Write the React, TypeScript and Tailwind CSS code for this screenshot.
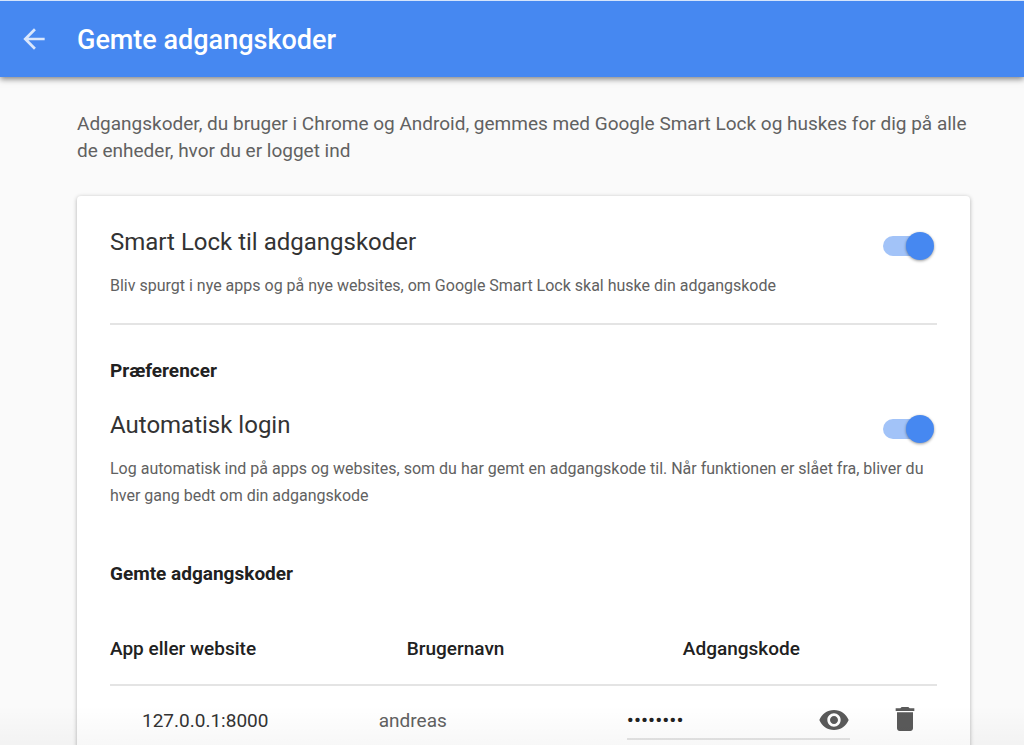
import { useId, useState, type ReactNode } from "react";
import { MdArrowBack, MdDelete, MdVisibility } from "react-icons/md";

type Login = {
  site: string;
  username: string;
  password: string;
};

const LOGINS: Login[] = [{ site: "127.0.0.1:8000", username: "andreas", password: "hemmelig" }];

/* Material switch on top of a real checkbox */
function Switch({ id, defaultChecked = false }: { id: string; defaultChecked?: boolean }) {
  return (
    <span className="relative mr-[3px] flex h-7 w-[51px] shrink-0 items-center">
      <input
        id={id}
        type="checkbox"
        defaultChecked={defaultChecked}
        className="peer absolute inset-0 z-10 m-0 h-full w-full cursor-pointer opacity-0"
      />
      <span className="h-5 w-12 rounded-full bg-gray-300 peer-checked:bg-[#a2c3f8]" />
      <span className="absolute left-0 h-7 w-7 rounded-full bg-white shadow-[0_1px_3px_rgba(0,0,0,0.4)] peer-checked:right-0 peer-checked:left-auto peer-checked:bg-[#4688f1]" />
    </span>
  );
}

function Setting({ title, children }: { title: string; children: ReactNode }) {
  const id = useId();
  return (
    <div>
      <div className="flex items-start justify-between">
        <label htmlFor={id} className="text-2xl leading-7 text-[#333]">
          {title}
        </label>
        <div className="pt-1">
          <Switch id={id} defaultChecked />
        </div>
      </div>
      <p className="mt-3 text-base leading-[27px] text-[#616161]">{children}</p>
    </div>
  );
}

function LoginRow({ login }: { login: Login }) {
  const [visible, setVisible] = useState(false);
  return (
    <tr className="align-middle">
      <td className="pt-4 pl-8 text-[19px] leading-7 text-[#333]">{login.site}</td>
      <td className="pt-4 text-[19px] leading-7 text-[#616161]">{login.username}</td>
      <td className="pt-4">
        <div className="flex h-[38px] items-center justify-between border-b-2 border-[#e4e4e4]">
          <input
            type={visible ? "text" : "password"}
            value={login.password}
            readOnly
            aria-label={`Adgangskode til ${login.site}`}
            className="w-0 flex-1 bg-transparent text-[21px] leading-7 text-[#212121] outline-none"
          />
          <button type="button" aria-label="Vis adgangskode" onClick={() => setVisible(!visible)}>
            <MdVisibility className="size-8 text-[#5a5a5a]" />
          </button>
        </div>
      </td>
      <td className="pt-3 pr-4 text-right">
        <button type="button" aria-label="Slet adgangskode" className="align-middle">
          <MdDelete className="size-8 text-[#5a5a5a]" />
        </button>
      </td>
    </tr>
  );
}

export default function App() {
  return (
    <div className="relative flex h-screen flex-col overflow-hidden bg-[#fafafa] font-['Roboto',sans-serif]">
      <header className="z-10 flex h-[77px] shrink-0 items-center border-t border-[#d5e4fb] bg-[#4688f1] pl-[18px] text-white shadow-[0_2px_6px_rgba(0,0,0,0.5)]">
        <a href="#" aria-label="Tilbage" className="text-white/80">
          <MdArrowBack className="size-8" />
        </a>
        <h1 className="ml-[27px] pt-0.5 text-[27px] leading-8 font-medium">Gemte adgangskoder</h1>
      </header>

      <main className="pt-[33px] pr-[54px] pl-[77px]">
        <p className="text-[19px] leading-[27px] text-[#616161]">
          Adgangskoder, du bruger i Chrome og Android, gemmes med Google Smart Lock og huskes for dig på alle de
          enheder, hvor du er logget ind
        </p>

        <section className="mt-8 rounded-sm bg-white px-[33px] pt-8 pb-12 shadow-[0_1px_4px_rgba(0,0,0,0.3)]">
          <div className="border-b-2 border-[#e4e4e4] pb-6">
            <Setting title="Smart Lock til adgangskoder">
              Bliv spurgt i nye apps og på nye websites, om Google Smart Lock skal huske din adgangskode
            </Setting>
          </div>

          <h2 className="mt-8 mb-[26px] text-[19px] leading-7 font-bold text-[#212121]">Præferencer</h2>
          <Setting title="Automatisk login">
            Log automatisk ind på apps og websites, som du har gemt en adgangskode til. Når funktionen er slået fra,
            bliver du hver gang bedt om din adgangskode
          </Setting>

          <h2 className="mt-[51px] mb-[26px] text-[19px] leading-7 font-bold text-[#212121]">Gemte adgangskoder</h2>
          <table className="w-full table-fixed text-left">
            <thead>
              <tr className="border-b-2 border-[#e4e4e4] text-[19px] leading-7 text-[#212121]">
                <th className="h-[71px] w-[32.5%] font-medium">App eller website</th>
                <th className="w-[30%] pl-7 font-medium">Brugernavn</th>
                <th className="w-[27%] pl-14 font-medium">Adgangskode</th>
                <th aria-label="Slet" />
              </tr>
            </thead>
            <tbody>
              {LOGINS.map((login) => (
                <LoginRow key={login.site} login={login} />
              ))}
            </tbody>
          </table>
        </section>
      </main>

      {/* soft fade along the bottom edge of the window */}
      <div className="pointer-events-none absolute inset-x-0 bottom-0 h-10 bg-linear-to-t from-black/3 to-transparent" />
    </div>
  );
}
